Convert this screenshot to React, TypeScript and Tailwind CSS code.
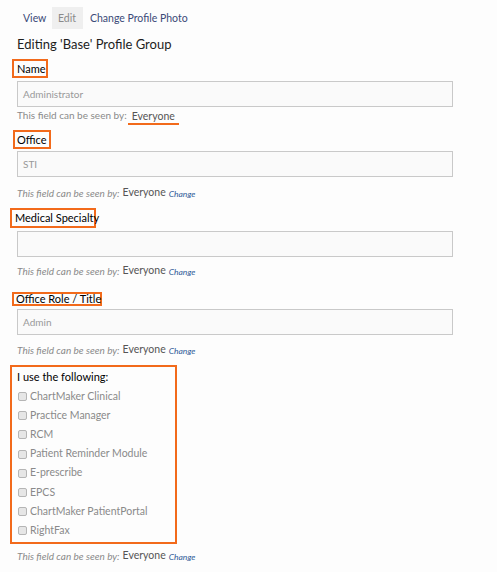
import React from "react";

const Seen = ({ h }: { h: string }) => (
  <div className={`${h} flex items-center text-[10px] italic text-[#8a8a8a]`}>
    This field can be seen by:
    <span className="not-italic text-[10.5px] text-[#555] ml-[3px]">Everyone</span>
    <span className="text-[8.5px] text-[#2f5b98] ml-[3px] mt-[2px]">Change</span>
  </div>
);

const Label = ({ text, box }: { text: string; box: string }) => (
  <span
    className={`${box} border-2 border-[#f26a1b] flex items-center whitespace-nowrap text-[11px] leading-[10px] text-black`}
  >
    {text}
  </span>
);

const Input = ({ value }: { value?: string }) => (
  <div className="w-[436px] h-[26px] border border-[#c9c9c9] bg-[#fafafa] flex items-center px-[5px] text-[10px] text-[#999]">
    {value}
  </div>
);

const apps = [
  "ChartMaker Clinical",
  "Practice Manager",
  "RCM",
  "Patient Reminder Module",
  "E-prescribe",
  "EPCS",
  "ChartMaker PatientPortal",
  "RightFax",
];

export default function App() {
  return (
    <div className="font-['Lato',sans-serif] bg-[#fdfdfd] w-[497px] h-[572px] pl-[17px] pt-[7px]">
      {/* Tabs */}
      <div className="flex h-[22px] text-[10.5px]">
        <span className="w-[35px] pl-[6px] pt-[1px] flex items-center text-[#3b4a78]">View</span>
        <span className="w-[31px] pl-[6px] pt-[1px] flex items-center bg-[#efefef] text-[#8a8a8a]">Edit</span>
        <span className="pl-[7px] pt-[1px] flex items-center text-[#3b4a78]">Change Profile Photo</span>
      </div>

      <h2 className="text-[13px] text-[#1e1e1e] h-[28px] pt-[4px] flex items-center">
        Editing 'Base' Profile Group
      </h2>

      {/* Name */}
      <div className="h-[24px] pt-[2px] flex items-start">
        <Label text="Name" box="w-[36px] h-[19px] ml-[-5px] pl-[3px]" />
      </div>
      <Input value="Administrator" />
      <div className="h-[16px] flex items-center text-[10px] text-[#8a8a8a]">
        This field can be seen by:
        <span className="text-[10.5px] text-[#555] ml-[1px] px-[4px] border-b-2 border-[#f26a1b] leading-[13px] mt-[5px]">
          Everyone
        </span>
      </div>

      {/* Office */}
      <div className="h-[22px] mt-[6px] pt-[1px] flex items-start">
        <Label text="Office" box="w-[38px] h-[19px] ml-[-4px] pl-[2px]" />
      </div>
      <Input value="STI" />
      <Seen h="h-[30px] pt-[2px]" />

      {/* Medical Specialty */}
      <div className="h-[24px] pt-[1px] flex items-start">
        <Label text="Medical Specialty" box="w-[86px] h-[20px] ml-[-7px] pl-[3px]" />
      </div>
      <Input />
      <Seen h="h-[28px]" />

      {/* Office Role */}
      <div className="h-[24px] pt-[7px] flex items-start">
        <Label text="Office Role / Title" box="w-[90px] h-[14px] ml-[-5px] pl-[2px]" />
      </div>
      <Input value="Admin" />
      <Seen h="h-[30px]" />

      {/* Checkbox group */}
      <div className="w-[167px] h-[179px] border-2 border-[#f26a1b] ml-[-7px] pl-[5px]">
        <div className="h-[20px] flex items-center text-[11px] text-black">I use the following:</div>
        {apps.map((a) => (
          <label key={a} className="h-[19.2px] flex items-center text-[10.5px] text-[#8a8a8a]">
            <span className="w-[9px] h-[9px] rounded-[2px] border border-[#b5b5b5] bg-[#e6e6e6] ml-[1px] mr-[3px]" />
            {a}
          </label>
        ))}
      </div>
      <Seen h="h-[24px]" />
    </div>
  );
}
